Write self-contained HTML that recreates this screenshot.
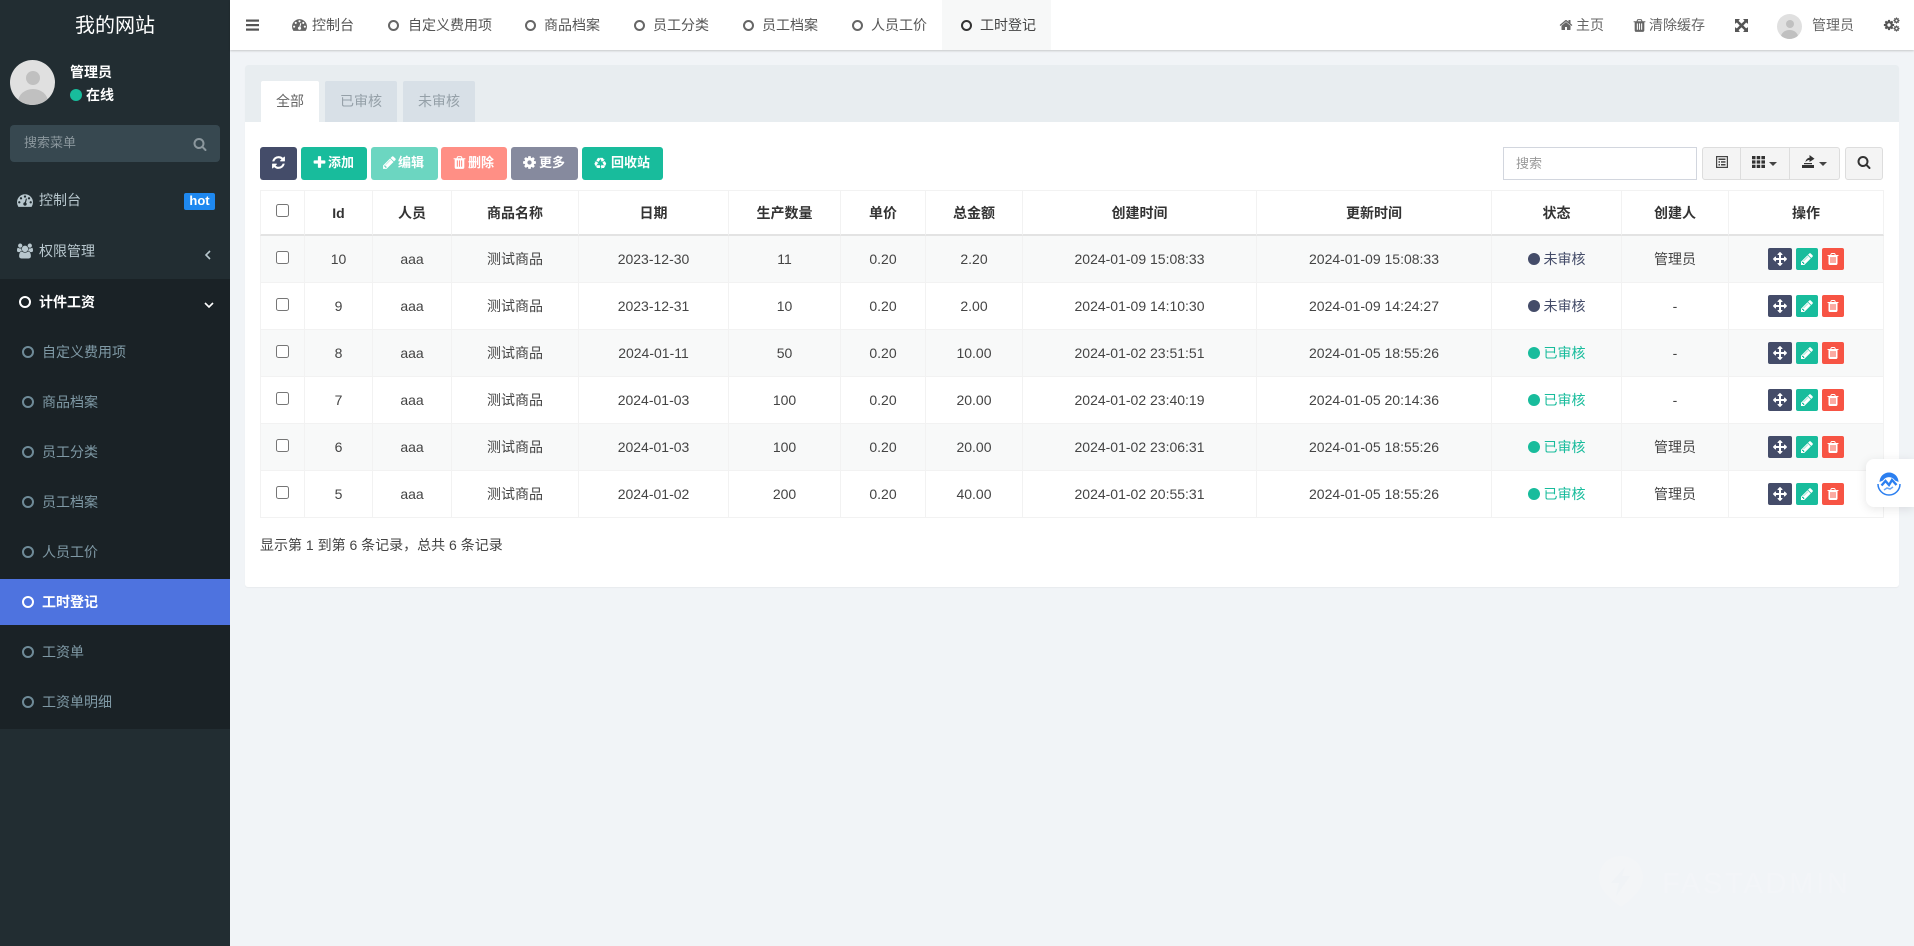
<!DOCTYPE html>
<html lang="zh-CN"><head><meta charset="utf-8"><title>工时登记</title>
<style>
html,body{margin:0;padding:0;width:1914px;height:946px;overflow:hidden;background:#f1f4f7;font-family:"Liberation Sans","Noto Sans CJK SC",sans-serif;font-size:14px;color:#444}
.a{position:absolute;white-space:nowrap}
svg{position:absolute;fill:currentColor;overflow:visible}
#side{left:0;top:0;width:230px;height:946px;background:#222d32}
#dark{left:0;top:279px;width:230px;height:450px;background:#1a2226}
.m{left:39px;color:#b8c7ce;height:20px;line-height:20px}
.s{left:42px;color:#7f99a5;height:20px;line-height:20px}
.r{width:8px;height:8px;border:2.2px solid #6f8b98;border-radius:50%;left:22px}
.n{color:#555;height:20px;line-height:20px;top:15px}
.nr{width:7px;height:7px;border:2px solid #666;border-radius:50%;top:20px}
.b{top:147px;height:33px;border-radius:3px;color:#fff}
.bt{top:153px;height:20px;line-height:20px;color:#fff;font-size:13px;font-weight:700}
table{position:absolute;left:260px;top:190px;width:1624px;table-layout:fixed;border-collapse:separate;border-spacing:0}
th,td{padding:0;text-align:center;border-left:1px solid #f2f2f2;box-sizing:border-box;color:#444;font-weight:400;position:relative}
th{height:46px;border-top:1px solid #f2f2f2;border-bottom:2px solid #e3e3e3;color:#333;font-weight:700}
td{height:47px;border-bottom:1px solid #f2f2f2}
th:last-child,td:last-child{border-right:1px solid #f2f2f2}
tbody tr:nth-child(odd) td{background:#f8f9f9}
input[type=checkbox]{margin:0;width:13px;height:13px;position:relative;top:-2px;display:block;left:15px}
.dt{display:inline-block;width:12px;height:12px;border-radius:50%;margin-right:4px;vertical-align:-1px}
.u{color:#444c69}.u .dt{background:#444c69}
.y{color:#18bc9c}.y .dt{background:#18bc9c}
.o{display:block;position:relative;height:22px;width:100px;margin-left:39px}
.o i{position:absolute;top:0;height:22px;border-radius:2px;color:#fff;display:block}
.o i svg{left:4px;top:4px}
.o1{left:0;width:24px;background:#444c69}.o i.o1 svg{left:5px;top:4px}
.o2{left:28px;width:22px;background:#18bc9c}
.o3{left:54px;width:22px;background:#f75444}
</style></head><body>
<svg width="0" height="0" style="position:absolute"><defs>
<symbol id="i-trash" viewBox="0 0 1792 1792"><path d="M704 1376v-704q0-14-9-23t-23-9h-64q-14 0-23 9t-9 23v704q0 14 9 23t23 9h64q14 0 23-9t9-23zm256 0v-704q0-14-9-23t-23-9h-64q-14 0-23 9t-9 23v704q0 14 9 23t23 9h64q14 0 23-9t9-23zm256 0v-704q0-14-9-23t-23-9h-64q-14 0-23 9t-9 23v704q0 14 9 23t23 9h64q14 0 23-9t9-23zm-544-992h448l-48-117q-7-9-17-11h-317q-10 2-17 11zm928 32v64q0 14-9 23t-23 9h-96v948q0 83-47 143.500t-113 60.500h-832q-66 0-113-58.500t-47-141.500v-952h-96q-14 0-23-9t-9-23v-64q0-14 9-23t23-9h309l70-167q15-37 54-63t79-26h320q40 0 79 26t54 63l70 167h309q14 0 23 9t9 23z"/></symbol>
<symbol id="i-search" viewBox="0 0 1792 1792"><path d="M1216 832q0-185-131.500-316.500t-316.500-131.500-316.500 131.500-131.500 316.500 131.500 316.500 316.500 131.500 316.500-131.500 131.500-316.500zm512 832q0 52-38 90t-90 38q-54 0-90-38l-343-342q-179 124-399 124-143 0-273.500-55.500t-225-150-150-225-55.500-273.500 55.500-273.500 150-225 225-150 273.500-55.500 273.500 55.500 225 150 150 225 55.500 273.500q0 220-124 399l343 343q37 37 37 90z"/></symbol>
<symbol id="i-plus" viewBox="0 0 1792 1792"><path d="M1600 736v192q0 40-28 68t-68 28h-416v416q0 40-28 68t-68 28h-192q-40 0-68-28t-28-68v-416h-416q-40 0-68-28t-28-68v-192q0-40 28-68t68-28h416v-416q0-40 28-68t68-28h192q40 0 68 28t28 68v416h416q40 0 68 28t28 68z"/></symbol>
<symbol id="i-pencil" viewBox="0 0 1792 1792"><path d="M491 1536l91-91-235-235-91 91v107h128v128h107zm523-928q0-22-22-22-10 0-17 7l-542 542q-7 7-7 17 0 22 22 22 10 0 17-7l542-542q7-7 7-17zm-54-192l416 416-832 832h-416v-416zm683 96q0 53-37 90l-166 166-416-416 166-165q36-38 90-38 53 0 91 38l235 234q37 39 37 91z"/></symbol>
<symbol id="i-refresh" viewBox="0 0 1792 1792"><path d="M1639 1056q0 5-1 7-64 268-268 434.500t-478 166.500q-146 0-282.500-55t-243.500-157l-129 129q-19 19-45 19t-45-19-19-45v-448q0-26 19-45t45-19h448q26 0 45 19t19 45-19 45l-137 137q71 66 161 102t187 36q134 0 250-65t186-179q11-17 53-117 8-23 30-23h192q13 0 22.500 9.500t9.500 22.500zm25-800v448q0 26-19 45t-45 19h-448q-26 0-45-19t-19-45 19-45l138-138q-148-137-349-137-134 0-250 65t-186 179q-11 17-53 117-8 23-30 23h-199q-13 0-22.500-9.500t-9.500-22.500v-7q65-268 270-434.500t480-166.500q146 0 284 55.500t245 156.500l130-129q19-19 45-19t45 19 19 45z"/></symbol>
<symbol id="i-arrows" viewBox="0 0 1792 1792"><path d="M1792 896q0 26-19 45l-256 256q-19 19-45 19t-45-19-19-45v-128h-384v384h128q26 0 45 19t19 45-19 45l-256 256q-19 19-45 19t-45-19l-256-256q-19-19-19-45t19-45 45-19h128v-384h-384v128q0 26-19 45t-45 19-45-19l-256-256q-19-19-19-45t19-45l256-256q19-19 45-19t45 19 19 45v128h384v-384h-128q-26 0-45-19t-19-45 19-45l256-256q19-19 45-19t45 19l256 256q19 19 19 45t-19 45-45 19h-128v384h384v-128q0-26 19-45t45-19 45 19l256 256q19 19 19 45z"/></symbol>
<symbol id="i-home" viewBox="0 0 1792 1792"><path d="M1472 992v480q0 26-19 45t-45 19h-384v-384h-256v384h-384q-26 0-45-19t-19-45v-480q0-1 .5-3t.5-3l575-474 575 474q1 2 1 6zm223-69l-62 74q-8 9-21 11h-3q-13 0-21-7l-692-577-692 577q-12 8-24 7-13-2-21-11l-62-74q-8-10-7-23.500t11-21.500l719-599q32-26 76-26t76 26l244 204v-195q0-14 9-23t23-9h192q14 0 23 9t9 23v408l219 182q10 8 11 21.500t-7 23.500z"/></symbol>
<symbol id="i-dash" viewBox="0 0 1792 1792"><path d="M384 1152q0-53-37.500-90.500t-90.500-37.500-90.500 37.500-37.500 90.500 37.500 90.500 90.500 37.500 90.500-37.500 37.500-90.500zm192-448q0-53-37.500-90.500t-90.500-37.500-90.500 37.500-37.500 90.500 37.500 90.500 90.500 37.500 90.500-37.500 37.500-90.500zm428 481l101-382q6-26-7.500-48.500t-38.500-29.500-48 6.500-30 39.500l-101 382q-60 5-107 43.500t-63 98.500q-20 77 20 146t117 89 146-20 89-117q16-60-6-117t-72-91zm660-33q0-53-37.500-90.500t-90.500-37.500-90.500 37.500-37.500 90.500 37.500 90.500 90.500 37.500 90.500-37.500 37.500-90.500zm-640-640q0-53-37.500-90.500t-90.500-37.500-90.500 37.500-37.500 90.500 37.500 90.500 90.500 37.500 90.500-37.500 37.500-90.500zm448 192q0-53-37.500-90.500t-90.500-37.500-90.500 37.500-37.500 90.500 37.500 90.500 90.500 37.500 90.500-37.500 37.500-90.500zm320 448q0 261-141 483-19 29-54 29h-1402q-35 0-54-29-141-221-141-483 0-182 71-348t191-286 286-191 348-71 348 71 286 191 191 286 71 348z" fill-rule="evenodd"/></symbol>
<symbol id="i-group" viewBox="0 0 1920 1792"><path d="M593 896q-162 5-265 128h-134q-82 0-138-40.500t-56-118.500q0-353 124-353 6 0 43.500 21t97.500 42.500 119 21.500q67 0 133-23-5 37-5 66 0 139 81 256zm1071 637q0 120-73 189.500t-194 69.500h-874q-121 0-194-69.500t-73-189.500q0-53 3.500-103.500t14-109 26.500-108.500 43-97.500 62-81 85.500-53.500 111.500-20q10 0 43 21.500t73 48 107 48 135 21.500 135-21.500 107-48 73-48 43-21.500q61 0 111.500 20t85.500 53.500 62 81 43 97.500 26.500 108.500 14 109 3.500 103.500zm-1024-1277q0 106-75 181t-181 75-181-75-75-181 75-181 181-75 181 75 75 181zm704 384q0 159-112.500 271.500t-271.500 112.500-271.500-112.500-112.500-271.500 112.500-271.500 271.500-112.500 271.500 112.500 112.500 271.500zm576 225q0 78-56 118.500t-138 40.500h-134q-103-123-265-128 81-117 81-256 0-29-5-66 66 23 133 23 59 0 119-21.500t97.500-42.500 43.500-21q124 0 124 353zm-128-609q0 106-75 181t-181 75-181-75-75-181 75-181 181-75 181 75 75 181z"/></symbol>
<symbol id="i-cog" viewBox="0 0 1792 1792"><path fill-rule="evenodd" d="M1152 896q0-106-75-181t-181-75-181 75-75 181 75 181 181 75 181-75 75-181zm512-109v222q0 12-8 23t-20 13l-185 28q-19 54-39 91 35 50 107 138 10 12 10 25t-9 23q-27 37-99 108t-94 71q-12 0-26-9l-138-108q-44 23-91 38-16 136-29 186-7 28-36 28h-222q-14 0-24.500-8.500t-11.500-21.500l-28-184q-49-16-90-37l-141 107q-10 9-25 9-14 0-25-11-126-114-165-168-7-10-7-23 0-12 8-23 15-21 51-66.500t54-70.500q-27-50-41-99l-183-27q-13-2-21-12.500t-8-23.500v-222q0-12 8-23t19-13l186-28q14-46 39-92-40-57-107-138-10-12-10-24 0-10 9-23 26-36 98.500-107.500t94.500-71.500q13 0 26 10l138 107q44-23 91-38 16-136 29-186 7-28 36-28h222q14 0 24.500 8.500t11.500 21.500l28 184q49 16 90 37l142-107q9-9 24-9 13 0 25 10 129 119 165 170 7 8 7 22 0 12-8 23-15 21-51 66.500t-54 70.500q26 50 41 98l183 28q13 2 21 12.500t8 23.500z"/></symbol>
</defs></svg>

<!-- Sidebar -->
<div class="a" id="side"></div>
<div class="a" id="dark"></div>
<div class="a" style="left:0;top:1px;width:230px;height:50px;line-height:50px;text-align:center;font-size:20px;color:#fff">我的网站</div>
<div class="a" style="left:10px;top:60px;width:45px;height:45px;border-radius:50%;background:#e0e0e0;overflow:hidden"><div class="a" style="left:15.500px;top:10.500px;width:14px;height:14px;border-radius:50%;background:#c0c0c0"></div><div class="a" style="left:8px;top:28.500px;width:30px;height:26px;border-radius:50%;background:#c0c0c0"></div></div>
<div class="a" style="left:70px;top:62px;height:20px;line-height:20px;color:#fff;font-weight:700">管理员</div>
<div class="a" style="left:70px;top:89px;width:12px;height:12px;border-radius:50%;background:#18bc9c"></div>
<div class="a" style="left:86px;top:85px;height:20px;line-height:20px;color:#fff;font-weight:700">在线</div>
<div class="a" style="left:10px;top:125px;width:210px;height:37px;background:#374850;border-radius:4px"></div>
<div class="a" style="left:24px;top:133px;height:20px;line-height:20px;color:#8b979d;font-size:13px">搜索菜单</div>
<svg style="left:193px;top:137px;color:#8b979d" width="14" height="14"><use href="#i-search"/></svg>

<svg style="left:17px;top:192px;color:#b8c7ce" width="16" height="16"><use href="#i-dash"/></svg>
<div class="a m" style="top:190px">控制台</div>
<div class="a" style="left:184px;top:193px;width:31px;height:17px;line-height:16px;background:#1e88f0;border-radius:2px;color:#fff;font-weight:700;font-size:13px;text-align:center">hot</div>
<svg style="left:17px;top:243px;color:#b8c7ce" width="16" height="16"><use href="#i-group"/></svg>
<div class="a m" style="top:241px">权限管理</div>
<svg style="left:204px;top:250px" width="8" height="10" fill="none"><path d="M6 1L2 5l4 4" fill="none" stroke="#b8c7ce" stroke-width="1.600"/></svg>
<div class="a" style="left:19px;top:296px;width:8px;height:8px;border:2.500px solid #fff;border-radius:50%"></div>
<div class="a m" style="top:292px;color:#fff;font-weight:700">计件工资</div>
<svg style="left:204px;top:301px" width="10" height="8" fill="none"><path d="M1 2l4 4 4-4" fill="none" stroke="#fff" stroke-width="1.600"/></svg>

<div class="a r" style="top:346px"></div><div class="a s" style="top:342px">自定义费用项</div>
<div class="a r" style="top:396px"></div><div class="a s" style="top:392px">商品档案</div>
<div class="a r" style="top:446px"></div><div class="a s" style="top:442px">员工分类</div>
<div class="a r" style="top:496px"></div><div class="a s" style="top:492px">员工档案</div>
<div class="a r" style="top:546px"></div><div class="a s" style="top:542px">人员工价</div>
<div class="a" style="left:0;top:579px;width:230px;height:46px;background:#4e73df"></div>
<div class="a r" style="top:596px;border-color:#fff"></div><div class="a s" style="top:592px;color:#fff;font-weight:700">工时登记</div>
<div class="a r" style="top:646px"></div><div class="a s" style="top:642px">工资单</div>
<div class="a r" style="top:696px"></div><div class="a s" style="top:692px">工资单明细</div>

<!-- Navbar -->
<div class="a" style="left:230px;top:0;width:1684px;height:50px;background:#fff;box-shadow:0 1px 2px rgba(0,0,0,.18)"></div>
<div class="a" style="left:942px;top:0;width:109px;height:50px;background:#f7f8f8"></div>
<svg style="left:246px;top:19px;color:#555" width="13" height="12"><rect width="13" height="2.200" y="0.500"/><rect width="13" height="2.200" y="5"/><rect width="13" height="2.200" y="9.500"/></svg>
<svg style="left:292px;top:17px;color:#666" width="15" height="15"><use href="#i-dash"/></svg>
<div class="a n" style="left:312px">控制台</div>
<div class="a nr" style="left:388px"></div><div class="a n" style="left:408px">自定义费用项</div>
<div class="a nr" style="left:525px"></div><div class="a n" style="left:544px">商品档案</div>
<div class="a nr" style="left:634px"></div><div class="a n" style="left:653px">员工分类</div>
<div class="a nr" style="left:743px"></div><div class="a n" style="left:762px">员工档案</div>
<div class="a nr" style="left:852px"></div><div class="a n" style="left:871px">人员工价</div>
<div class="a nr" style="left:961px;border-color:#333"></div><div class="a n" style="left:980px;color:#444">工时登记</div>

<svg style="left:1559px;top:18px;color:#666" width="14" height="14"><use href="#i-home"/></svg>
<div class="a n" style="left:1576px;color:#666">主页</div>
<svg style="left:1632px;top:18px;color:#666" width="15" height="15"><use href="#i-trash"/></svg>
<div class="a n" style="left:1649px;color:#666">清除缓存</div>
<svg style="left:1735px;top:19px;color:#555" width="13" height="13" viewBox="0 0 12 12"><path d="M0 0h4.500L3.300 1.700 6 4.300 8.700 1.700 7.500 0H12v4.500l-1.700-1.300L7.700 6l2.600 2.700L12 7.500V12H7.500l1.200-1.700L6 7.700 3.300 10.300 4.500 12H0V7.500l1.700 1.200L4.300 6 1.700 3.200 0 4.500z"/></svg>
<div class="a" style="left:1777px;top:14px;width:25px;height:25px;border-radius:50%;background:#e0e0e0;overflow:hidden"><div class="a" style="left:8.600px;top:5.800px;width:8px;height:8px;border-radius:50%;background:#c0c0c0"></div><div class="a" style="left:4.400px;top:15.800px;width:17px;height:14px;border-radius:50%;background:#c0c0c0"></div></div>
<div class="a n" style="left:1812px;color:#666">管理员</div>
<svg style="left:1883px;top:19px;color:#555" width="12" height="12"><use href="#i-cog"/></svg>
<svg style="left:1893px;top:17px;color:#555" width="7" height="7"><use href="#i-cog"/></svg>
<svg style="left:1893px;top:25px;color:#555" width="7" height="7"><use href="#i-cog"/></svg>

<!-- Panel -->
<div class="a" style="left:245px;top:65px;width:1654px;height:522px;background:#fff;border-radius:3px;box-shadow:0 1px 1px rgba(0,0,0,.04)"></div>
<div class="a" style="left:245px;top:65px;width:1654px;height:57px;background:#e8edf0;border-radius:3px 3px 0 0"></div>
<div class="a" style="left:261px;top:81px;width:58px;height:41px;line-height:41px;background:#fff;border-radius:2px 2px 0 0;text-align:center;color:#666">全部</div>
<div class="a" style="left:325px;top:81px;width:72px;height:41px;line-height:41px;background:#d8e0e7;border-radius:2px 2px 0 0;text-align:center;color:#95a0a8">已审核</div>
<div class="a" style="left:403px;top:81px;width:72px;height:41px;line-height:41px;background:#d8e0e7;border-radius:2px 2px 0 0;text-align:center;color:#95a0a8">未审核</div>

<!-- Toolbar -->
<div class="a b" style="left:260px;width:37px;background:#444c69"></div>
<svg style="left:271px;top:155px;color:#fff" width="15" height="15"><use href="#i-refresh"/></svg>
<div class="a b" style="left:301px;width:66px;background:#18bc9c"></div>
<svg style="left:312px;top:155px;color:#fff" width="15" height="15"><use href="#i-plus"/></svg><div class="a bt" style="left:328px">添加</div>
<div class="a b" style="left:371px;width:67px;background:#6cd6c1"></div>
<svg style="left:382px;top:155px;color:#fff" width="15" height="15"><use href="#i-pencil"/></svg><div class="a bt" style="left:398px">编辑</div>
<div class="a b" style="left:441px;width:66px;background:#ff8f85"></div>
<svg style="left:452px;top:155px;color:#fff" width="15" height="15"><use href="#i-trash"/></svg><div class="a bt" style="left:468px">删除</div>
<div class="a b" style="left:511px;width:67px;background:#868a9e"></div>
<svg style="left:522px;top:155px;color:#fff" width="15" height="15"><use href="#i-cog"/></svg><div class="a bt" style="left:539px">更多</div>
<div class="a b" style="left:582px;width:81px;background:#18bc9c"></div>
<div class="a" style="left:593px;top:154px;height:20px;line-height:20px;color:#fff;font:16px 'DejaVu Sans',sans-serif">♻</div><div class="a bt" style="left:611px">回收站</div>

<div class="a" style="left:1503px;top:147px;width:194px;height:33px;box-sizing:border-box;border:1px solid #d2d6de;background:#fff"></div>
<div class="a" style="left:1516px;top:154px;height:20px;line-height:20px;font-size:13px;color:#999">搜索</div>
<div class="a" style="left:1702px;top:147px;width:138px;height:33px;box-sizing:border-box;background:#f4f4f4;border:1px solid #ddd;border-radius:3px"></div>
<div class="a" style="left:1740px;top:147px;width:1px;height:33px;background:#ddd"></div>
<div class="a" style="left:1789px;top:147px;width:1px;height:33px;background:#ddd"></div>
<svg style="left:1716px;top:156px;color:#444" width="12" height="12" viewBox="0 0 12 12"><rect x=".6" y=".6" width="10.800" height="10.800" fill="none" stroke="#444" stroke-width="1.200"/><rect x="2.500" y="2.500" width="7" height="1.500"/><rect x="2.500" y="5.200" width="1.500" height="1.500"/><rect x="5" y="5.200" width="4.500" height="1.500"/><rect x="2.500" y="8" width="1.500" height="1.500"/><rect x="5" y="8" width="4.500" height="1.500"/></svg>
<svg style="left:1752px;top:156px;color:#333" width="13" height="12" viewBox="0 0 13 12"><path d="M0 0h3.500v3.200H0zM4.700 0h3.500v3.200H4.700zM9.400 0H13v3.200H9.400zM0 4.400h3.500v3.200H0zM4.700 4.400h3.500v3.200H4.700zM9.400 4.400H13v3.200H9.400zM0 8.800h3.500V12H0zM4.700 8.800h3.500V12H4.700zM9.400 8.800H13V12H9.400z"/></svg>
<svg style="left:1769px;top:162px;color:#444" width="8" height="4"><path d="M0 0h8L4 4z"/></svg>
<svg style="left:1802px;top:155px;color:#333" width="13" height="13" viewBox="0 0 13 13"><path d="M0 10h12v3H0z"/><path d="M2 8h8v1.200H2z"/><path d="M3.500 7.200C3.800 4.400 5.500 3 7.500 2.800V0L12.500 3.800 7.500 7V5C5.800 5 4.500 5.800 3.500 7.200z"/></svg>
<svg style="left:1819px;top:162px;color:#444" width="8" height="4"><path d="M0 0h8L4 4z"/></svg>
<div class="a" style="left:1845px;top:147px;width:38px;height:33px;box-sizing:border-box;background:#f4f4f4;border:1px solid #ddd;border-radius:3px"></div>
<svg style="left:1857px;top:155px;color:#333" width="14" height="14"><use href="#i-search"/></svg>

<!-- Table -->
<table>
<colgroup><col style="width:44px"><col style="width:68px"><col style="width:79px"><col style="width:127px"><col style="width:150px"><col style="width:112px"><col style="width:85px"><col style="width:97px"><col style="width:234px"><col style="width:235px"><col style="width:130px"><col style="width:107px"><col style="width:156px"></colgroup>
<thead><tr><th><input type="checkbox"></th><th>Id</th><th>人员</th><th>商品名称</th><th>日期</th><th>生产数量</th><th>单价</th><th>总金额</th><th>创建时间</th><th>更新时间</th><th>状态</th><th>创建人</th><th>操作</th></tr></thead>
<tbody>
<tr><td><input type="checkbox"></td><td>10</td><td>aaa</td><td>测试商品</td><td>2023-12-30</td><td>11</td><td>0.20</td><td>2.20</td><td>2024-01-09 15:08:33</td><td>2024-01-09 15:08:33</td><td class="u"><span class="dt"></span>未审核</td><td>管理员</td><td><span class="o"><i class="o1"><svg width="14" height="14"><use href="#i-arrows"/></svg></i><i class="o2"><svg width="14" height="14"><use href="#i-pencil"/></svg></i><i class="o3"><svg width="14" height="14"><use href="#i-trash"/></svg></i></span></td></tr>
<tr><td><input type="checkbox"></td><td>9</td><td>aaa</td><td>测试商品</td><td>2023-12-31</td><td>10</td><td>0.20</td><td>2.00</td><td>2024-01-09 14:10:30</td><td>2024-01-09 14:24:27</td><td class="u"><span class="dt"></span>未审核</td><td>-</td><td><span class="o"><i class="o1"><svg width="14" height="14"><use href="#i-arrows"/></svg></i><i class="o2"><svg width="14" height="14"><use href="#i-pencil"/></svg></i><i class="o3"><svg width="14" height="14"><use href="#i-trash"/></svg></i></span></td></tr>
<tr><td><input type="checkbox"></td><td>8</td><td>aaa</td><td>测试商品</td><td>2024-01-11</td><td>50</td><td>0.20</td><td>10.00</td><td>2024-01-02 23:51:51</td><td>2024-01-05 18:55:26</td><td class="y"><span class="dt"></span>已审核</td><td>-</td><td><span class="o"><i class="o1"><svg width="14" height="14"><use href="#i-arrows"/></svg></i><i class="o2"><svg width="14" height="14"><use href="#i-pencil"/></svg></i><i class="o3"><svg width="14" height="14"><use href="#i-trash"/></svg></i></span></td></tr>
<tr><td><input type="checkbox"></td><td>7</td><td>aaa</td><td>测试商品</td><td>2024-01-03</td><td>100</td><td>0.20</td><td>20.00</td><td>2024-01-02 23:40:19</td><td>2024-01-05 20:14:36</td><td class="y"><span class="dt"></span>已审核</td><td>-</td><td><span class="o"><i class="o1"><svg width="14" height="14"><use href="#i-arrows"/></svg></i><i class="o2"><svg width="14" height="14"><use href="#i-pencil"/></svg></i><i class="o3"><svg width="14" height="14"><use href="#i-trash"/></svg></i></span></td></tr>
<tr><td><input type="checkbox"></td><td>6</td><td>aaa</td><td>测试商品</td><td>2024-01-03</td><td>100</td><td>0.20</td><td>20.00</td><td>2024-01-02 23:06:31</td><td>2024-01-05 18:55:26</td><td class="y"><span class="dt"></span>已审核</td><td>管理员</td><td><span class="o"><i class="o1"><svg width="14" height="14"><use href="#i-arrows"/></svg></i><i class="o2"><svg width="14" height="14"><use href="#i-pencil"/></svg></i><i class="o3"><svg width="14" height="14"><use href="#i-trash"/></svg></i></span></td></tr>
<tr><td><input type="checkbox"></td><td>5</td><td>aaa</td><td>测试商品</td><td>2024-01-02</td><td>200</td><td>0.20</td><td>40.00</td><td>2024-01-02 20:55:31</td><td>2024-01-05 18:55:26</td><td class="y"><span class="dt"></span>已审核</td><td>管理员</td><td><span class="o"><i class="o1"><svg width="14" height="14"><use href="#i-arrows"/></svg></i><i class="o2"><svg width="14" height="14"><use href="#i-pencil"/></svg></i><i class="o3"><svg width="14" height="14"><use href="#i-trash"/></svg></i></span></td></tr>
</tbody></table>
<div class="a" style="left:260px;top:535px;height:20px;line-height:20px;color:#444">显示第 1 到第 6 条记录，总共 6 条记录</div>

<!-- Float widget -->
<div class="a" style="left:1866px;top:459px;width:48px;height:48px;background:#fff;border-radius:8px 0 0 8px;box-shadow:0 2px 10px rgba(0,0,0,.1)"></div>
<svg style="left:1877px;top:471px" width="24" height="24" viewBox="0 0 24 24"><path d="M2.500 11A9.500 9.500 0 0 1 21.500 11L18 9.500A7 7 0 0 0 6 9.500z" fill="#2b7ff0"/><path d="M1 13A11 11 0 0 0 23 13" fill="none" stroke="#2b7ff0" stroke-width="1.500"/><path d="M4.500 14.500l4-4.500 3.500 4 3-5 4.500 5" fill="none" stroke="#2b7ff0" stroke-width="2.400"/><path d="M7 19l3-2 3 1 3-2" fill="none" stroke="#6aa7f5" stroke-width="1.500"/></svg>

<!-- Watermark -->
<svg style="left:1599px;top:856px" width="44" height="51" viewBox="0 0 44 51"><path d="M22 0C9 0 0 9 0 22c0 12 12 22 22 29 10-7 22-17 22-29C44 9 35 0 22 0z" fill="#f3f5f7"/><path d="M26 11L12 27h8l-3 13 14-20h-8z" fill="#f0f3f6"/></svg>
<svg style="left:1660px;top:868px" width="190" height="30"><text x="2" y="25" font-family="Liberation Sans" font-size="29" textLength="186" lengthAdjust="spacing" fill="#f3f5f8">FASTADMIN</text></svg>
</body></html>
